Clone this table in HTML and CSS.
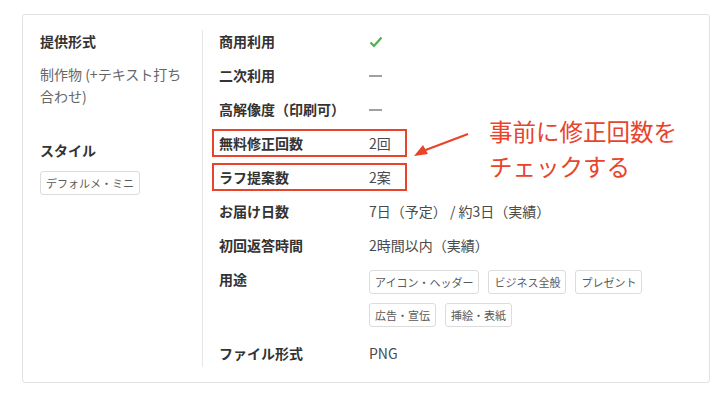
FILE: index.html
```html
<!DOCTYPE html>
<html>
<head>
    <title>サービス詳細</title>
    <meta charset="utf-8">
    <link rel="stylesheet" href="styles.css">
</head>
<body>
    <div class="card">
        <div class="side">
            <div class="side-title">提供形式</div>
            <div class="side-text">制作物 (+テキスト打ち合わせ)</div>
            <div class="side-title style-title">スタイル</div>
            <div class="tags">
                <span class="tag">デフォルメ・ミニ</span>
            </div>
        </div>
        <div class="spec">
            <div class="row">
                <div class="label">商用利用</div>
                <div class="value">
                    <svg class="check" width="14" height="12" viewBox="0 0 14 12">
                        <path d="M1.5 6.5 L5 10 L12.5 1.5" fill="none" stroke="#4caf50" stroke-width="2.2"/>
                    </svg>
                </div>
            </div>
            <div class="row">
                <div class="label">二次利用</div>
                <div class="value"><span class="dash"></span></div>
            </div>
            <div class="row">
                <div class="label">高解像度（印刷可）</div>
                <div class="value"><span class="dash"></span></div>
            </div>
            <div class="row marked">
                <div class="label">無料修正回数</div>
                <div class="value">2回</div>
                <span class="mark"></span>
                <svg class="arrow" width="64" height="28" viewBox="0 0 64 28">
                    <line x1="57" y1="3" x2="12" y2="20" stroke="#e8442c" stroke-width="2.2"/>
                    <path d="M3 25 L12 14 L17 23 Z" fill="#e8442c"/>
                </svg>
                <div class="note">事前に修正回数を<br>チェックする</div>
            </div>
            <div class="row marked">
                <div class="label">ラフ提案数</div>
                <div class="value">2案</div>
                <span class="mark"></span>
            </div>
            <div class="row">
                <div class="label">お届け日数</div>
                <div class="value">7日（予定） / 約3日（実績）</div>
            </div>
            <div class="row">
                <div class="label">初回返答時間</div>
                <div class="value">2時間以内（実績）</div>
            </div>
            <div class="row usage">
                <div class="label">用途</div>
                <div class="value tags">
                    <span class="tag">アイコン・ヘッダー</span>
                    <span class="tag">ビジネス全般</span>
                    <span class="tag">プレゼント</span>
                    <span class="tag">広告・宣伝</span>
                    <span class="tag">挿絵・表紙</span>
                </div>
            </div>
            <div class="row">
                <div class="label">ファイル形式</div>
                <div class="value">PNG</div>
            </div>
        </div>
    </div>
</body>
</html>
```

FILE: styles.css
```css
*{
    box-sizing: border-box;
}
body{
    margin:0;
    background-color: #fff;
    font-family: "Noto Sans CJK JP", "Noto Sans", sans-serif;
    color:#333;
}
.card{
    display:flex;
    margin:14px 0 0 22px;
    width:688px;
    height:369px;
    padding:15px 0;
    border:1px solid #e2e2e2;
    border-radius: 3px;
}
.side{
    width:180px;
    padding-left:17px;
    border-right:1px solid #e6e6e6;
}
.side-title{
    font-size:14px;
    font-weight:bold;
    line-height:22px;
}
.side-text{
    margin-top:11px;
    width:150px;
    font-size:14px;
    line-height:22px;
    color:#666;
}
.style-title{
    margin-top:32px;
}
.side .tags{
    margin-top:10px;
}
.tags{
    display:flex;
    flex-wrap:wrap;
    gap:9px 9px;
}
.tag{
    display:inline-block;
    height:24px;
    line-height:22px;
    padding:0 5px;
    font-size:11px;
    color:#5a5a5a;
    border:1px solid #dcdcdc;
    border-radius:3px;
}
.spec{
    flex:1;
    padding-left:16px;
}
.row{
    position:relative;
    display:flex;
    line-height:22px;
    font-size:14px;
    margin-bottom:12px;
}
.label{
    width:150px;
    font-weight:bold;
    color:#333;
}
.value{
    color:#4a4a4a;
}
.check{
    vertical-align:middle;
    margin-top:-3px;
}
.dash{
    display:inline-block;
    width:13px;
    height:2px;
    background:#a0a0a0;
    vertical-align:middle;
    margin-top:-2px;
}
.usage{
    margin-bottom:15px;
}
.usage .value{
    width:300px;
    margin-top:2px;
}

/* 赤枠と注釈 */
.mark{
    position:absolute;
    left:-7px;
    top:-3px;
    width:195px;
    height:28px;
    border:2px solid #e8442c;
}
.arrow{
    position:absolute;
    left:192px;
    top:-1px;
}
.note{
    position:absolute;
    left:270px;
    top:-18px;
    font-size:23.5px;
    line-height:35px;
    color:#e8442c;
    white-space:nowrap;
}
```
